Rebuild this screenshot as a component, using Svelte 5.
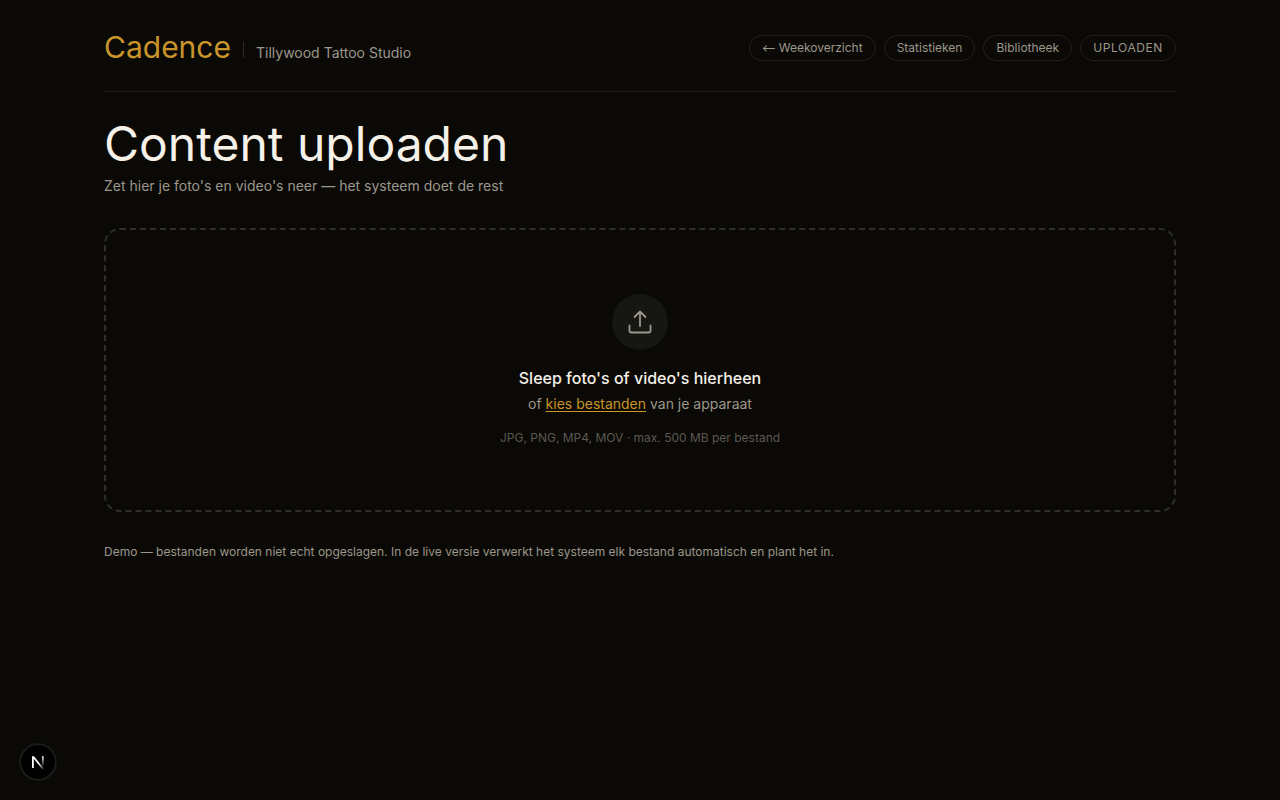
<script>
	const links = [
		{ label: 'Weekoverzicht', href: '#week', back: true },
		{ label: 'Statistieken', href: '#stats' },
		{ label: 'Bibliotheek', href: '#library' }
	]

	let file_input
</script>

<div class="page">
	<header>
		<div class="brand">
			<span class="logo">Cadence</span>
			<span class="divider"></span>
			<span class="studio">Tillywood Tattoo Studio</span>
		</div>
		<nav>
			{#each links as link}
			<a href={link.href}>{#if link.back}<span class="arrow">←</span>{' '}{/if}{link.label}</a>
			{/each}
			<a href="#upload" class="current">UPLOADEN</a>
		</nav>
	</header>

	<main>
		<h1>Content uploaden</h1>
		<p class="intro">Zet hier je foto's en video's neer — het systeem doet de rest</p>

		<div class="dropzone">
			<div class="icon">
				<svg width="28" height="28" viewBox="0 0 28 28" fill="none" stroke="currentColor" stroke-width="1.8" stroke-linecap="round" stroke-linejoin="round">
					<path d="M14 18V3.5M8.5 9L14 3.5L19.5 9" />
					<path d="M3.5 17.5V22.5A2 2 0 0 0 5.5 24.5H22.5A2 2 0 0 0 24.5 22.5V17.5" />
				</svg>
			</div>
			<p class="title">Sleep foto's of video's hierheen</p>
			<p class="choose">of <button onclick={() => file_input.click()}>kies bestanden</button> van je apparaat</p>
			<p class="formats">JPG, PNG, MP4, MOV · max. 500 MB per bestand</p>
			<input bind:this={file_input} type="file" multiple hidden>
		</div>

		<p class="note">Demo — bestanden worden niet echt opgeslagen. In de live versie verwerkt het systeem elk bestand automatisch en plant het in.</p>
	</main>
</div>

<div class="dev-badge">
	<svg width="36" height="36" viewBox="0 0 36 36" fill="none">
		<defs>
			<linearGradient id="stem" x1="0" y1="12" x2="0" y2="23" gradientUnits="userSpaceOnUse">
				<stop stop-color="#fff" />
				<stop offset="1" stop-color="#fff" stop-opacity="0" />
			</linearGradient>
			<linearGradient id="diagonal" x1="19" y1="19" x2="23" y2="25" gradientUnits="userSpaceOnUse">
				<stop stop-color="#fff" />
				<stop offset="1" stop-color="#fff" stop-opacity="0.2" />
			</linearGradient>
		</defs>
		<path d="M12 24V12.2H14L23.8 24.6L22.4 25.6L13.8 14.8V24Z" fill="url(#diagonal)" />
		<path d="M22.8 12.2V22.5" stroke="url(#stem)" stroke-width="1.7" />
	</svg>
</div>

<style>
:global(body) {
	background: #0a0905;
	font-family: Inter, sans-serif;
	color: #f5f0e8;
}
* {
	box-sizing: border-box;
}
p, h1 {
	margin: 0;
}
.page {
	max-width: 1120px;
	margin: 0 auto;
	padding: 28px 24px;
}
header {
	display: flex;
	justify-content: space-between;
	align-items: center;
	height: 64px;
	padding-bottom: 24px;
	border-bottom: 1px solid #1e1d19;
}
.brand {
	display: flex;
	align-items: baseline;
	gap: 12px;
	margin-top: -2px;
}
.logo {
	font-size: 30px;
	line-height: 36px;
	color: #c9952a;
}
.divider {
	width: 1px;
	height: 16px;
	background: #2c2b27;
}
.studio {
	font-size: 14px;
	line-height: 20px;
	color: #9c978c;
}
nav {
	display: flex;
	gap: 8px;
}
nav a {
	padding: 4px 12px;
	border: 1px solid #22211d;
	border-radius: 13px;
	font-size: 12px;
	line-height: 16px;
	color: #9c978c;
	text-decoration: none;
}
nav .current {
	letter-spacing: 0.6px;
}
.arrow {
	font-family: "Noto Sans CJK SC", sans-serif;
	font-size: 13px;
	line-height: 0;
	vertical-align: -1px;
}
main {
	padding-top: 28px;
}
h1 {
	font-size: 48px;
	font-weight: 400;
	line-height: 48px;
}
.intro {
	margin-top: 8px;
	font-size: 14px;
	line-height: 20px;
	color: #9c978c;
}
.dropzone {
	display: flex;
	flex-direction: column;
	align-items: center;
	margin-top: 32px;
	padding: 64px 24px;
	border: 2px dashed #2f2e2a;
	border-radius: 16px;
}
.icon {
	display: flex;
	align-items: center;
	justify-content: center;
	width: 56px;
	height: 56px;
	margin-bottom: 16px;
	border-radius: 50%;
	background: #161612;
	color: #9c978c;
}
.title {
	font-size: 16px;
	font-weight: 500;
	line-height: 24px;
}
.choose {
	margin-top: 4px;
	font-size: 14px;
	line-height: 20px;
	color: #9c978c;
}
.choose button {
	padding: 0;
	border: 0;
	background: none;
	font: inherit;
	color: #c9952a;
	text-decoration: underline;
	text-underline-offset: 2px;
	cursor: pointer;
}
.formats {
	margin-top: 16px;
	font-size: 12px;
	line-height: 16px;
	color: #5c5850;
}
.note {
	margin-top: 32px;
	font-size: 12px;
	line-height: 16px;
	color: #9c978c;
}
.dev-badge {
	position: fixed;
	left: 20px;
	bottom: 20px;
	width: 36px;
	height: 36px;
	border-radius: 50%;
	background: #000;
	box-shadow: 0 0 0 1px #171717, inset 0 0 0 1px #242422;
}
</style>
